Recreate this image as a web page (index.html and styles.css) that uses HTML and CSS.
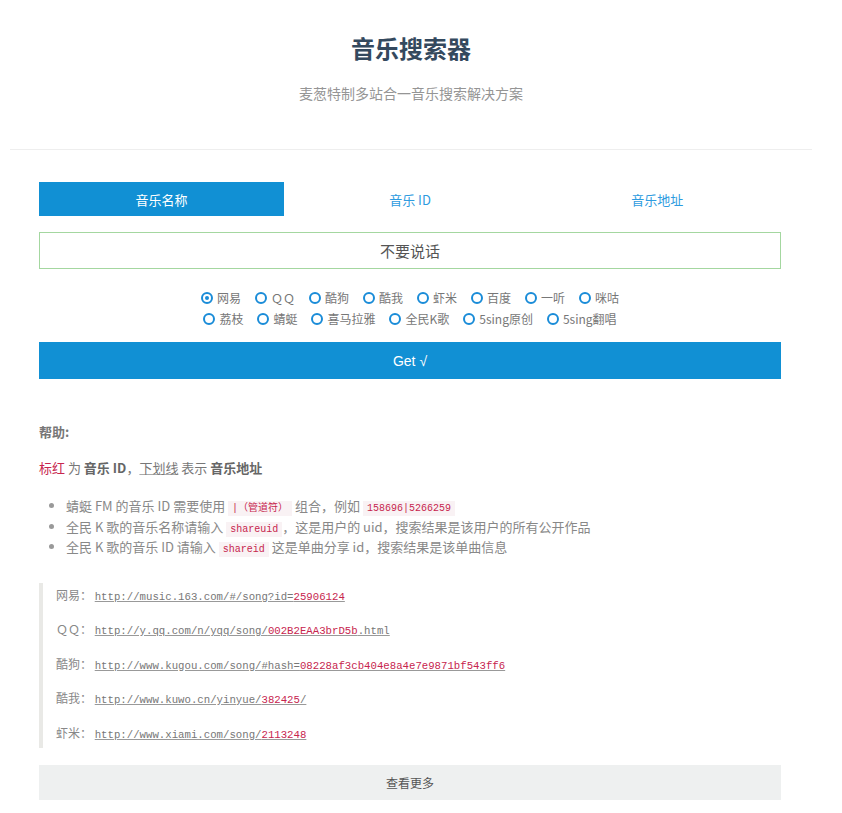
FILE: index.html
```html
<!DOCTYPE html>
<html lang="zh-CN">
<head>
<meta charset="utf-8">
<title>音乐搜索器</title>
<link rel="stylesheet" href="styles.css">
</head>
<body>
<div class="page">
  <header class="header">
    <h1 class="title">音乐搜索器</h1>
    <p class="subtitle">麦葱特制多站合一音乐搜索解决方案</p>
  </header>
  <main class="main">
    <nav class="tabs">
      <div class="tab tab-active">音乐名称</div>
      <div class="tab">音乐 ID</div>
      <div class="tab">音乐地址</div>
    </nav>
    <div class="search">不要说话</div>
    <div class="sources">
      <div class="row">
        <label class="opt"><span class="radio checked"></span>网易</label>
        <label class="opt"><span class="radio"></span>ＱＱ</label>
        <label class="opt"><span class="radio"></span>酷狗</label>
        <label class="opt"><span class="radio"></span>酷我</label>
        <label class="opt"><span class="radio"></span>虾米</label>
        <label class="opt"><span class="radio"></span>百度</label>
        <label class="opt"><span class="radio"></span>一听</label>
        <label class="opt"><span class="radio"></span>咪咕</label>
      </div>
      <div class="row">
        <label class="opt"><span class="radio"></span>荔枝</label>
        <label class="opt"><span class="radio"></span>蜻蜓</label>
        <label class="opt"><span class="radio"></span>喜马拉雅</label>
        <label class="opt"><span class="radio"></span>全民K歌</label>
        <label class="opt"><span class="radio"></span>5sing原创</label>
        <label class="opt"><span class="radio"></span>5sing翻唱</label>
      </div>
    </div>
    <div class="get-btn">Get √</div>

    <section class="help">
      <h3 class="help-title">帮助:</h3>
      <p class="legend"><span class="red">标红</span> 为 <b>音乐 ID</b>，<span class="ul">下划线</span> 表示 <b>音乐地址</b></p>
      <ul class="tips">
        <li>蜻蜓 FM 的音乐 ID 需要使用 <code>|（管道符）</code> 组合，例如 <code>158696|5266259</code></li>
        <li>全民 K 歌的音乐名称请输入 <code>shareuid</code>，这是用户的 uid，搜索结果是该用户的所有公开作品</li>
        <li>全民 K 歌的音乐 ID 请输入 <code>shareid</code> 这是单曲分享 id，搜索结果是该单曲信息</li>
      </ul>
      <blockquote class="examples">
        <p>网易： <span class="link">http://music.163.com/#/song?id=<span class="id">25906124</span></span></p>
        <p>ＱＱ： <span class="link">http://y.qq.com/n/yqq/song/<span class="id">002B2EAA3brD5b</span>.html</span></p>
        <p>酷狗： <span class="link">http://www.kugou.com/song/#hash=<span class="id">08228af3cb404e8a4e7e9871bf543ff6</span></span></p>
        <p>酷我： <span class="link">http://www.kuwo.cn/yinyue/<span class="id">382425</span>/</span></p>
        <p>虾米： <span class="link">http://www.xiami.com/song/<span class="id">2113248</span></span></p>
      </blockquote>
      <div class="more">查看更多</div>
    </section>
  </main>
</div>
</body>
</html>
```
FILE: styles.css
```css
html, body {
  margin: 0;
  padding: 0;
  background: #fff;
}
body {
  font-family: "Noto Sans CJK SC", "Open Sans", sans-serif;
  color: #666;
}
.page {
  width: 822px;
  display: flex;
  flex-direction: column;
}
.header {
  margin: 0 10px;
  padding: 31px 0 46px;
  border-bottom: 1px solid #eeeeee;
  text-align: center;
}
.title {
  margin: 0;
  font-size: 24px;
  line-height: 34px;
  font-weight: 700;
  color: #34495e;
}
.subtitle {
  margin: 18px 0 0;
  font-size: 14px;
  line-height: 20px;
  color: #959595;
}
.main {
  width: 742px;
  margin: 32px 0 0 39px;
  display: flex;
  flex-direction: column;
}
.tabs {
  display: grid;
  grid-template-columns: 1fr 1fr 1fr;
  height: 34px;
}
.tab {
  display: flex;
  align-items: center;
  justify-content: center;
  font-size: 13px;
  color: #2d9be0;
}
.tab-active {
  width: 245px;
  background: #1190d4;
  color: #fff;
}
.search {
  margin-top: 16px;
  height: 35px;
  border: 1px solid #a4d7a0;
  display: flex;
  align-items: center;
  justify-content: center;
  font-size: 15px;
  color: #555;
}
.sources {
  margin-top: 18px;
  display: flex;
  flex-direction: column;
  align-items: center;
}
.row {
  display: flex;
  justify-content: center;
  gap: 14px;
  height: 21px;
  align-items: center;
}
.opt {
  display: flex;
  align-items: center;
  gap: 4px;
  font-size: 12px;
  line-height: 21px;
  color: #777;
}
.radio {
  width: 8px;
  height: 8px;
  border: 2px solid #1a8cd8;
  border-radius: 50%;
  display: flex;
  align-items: center;
  justify-content: center;
}
.radio.checked::after {
  content: "";
  width: 4px;
  height: 4px;
  border-radius: 50%;
  background: #1a8cd8;
}
.get-btn {
  margin-top: 13px;
  height: 37px;
  background: #1190d4;
  color: #fff;
  font-family: "Liberation Sans", "Open Sans", sans-serif;
  font-size: 14px;
  display: flex;
  align-items: center;
  justify-content: center;
}
.help {
  margin-top: 43px;
  display: flex;
  flex-direction: column;
}
.help-title {
  margin: 0;
  font-size: 13px;
  line-height: 20px;
  font-weight: 700;
  color: #777;
}
.legend {
  margin: 16px 0 0;
  font-size: 13px;
  line-height: 20px;
  color: #777;
}
.legend b {
  color: #666;
}
.red {
  color: #c7254e;
}
.ul {
  text-decoration: underline;
  text-decoration-color: #aaa;
}
.tips {
  margin: 18px 0 0;
  padding-left: 27px;
  font-size: 13px;
  line-height: 20.5px;
  color: #888;
}
.tips li {
  height: 20.5px;
}
.tips li::marker {
  color: #999;
}
code {
  font-family: "Liberation Mono", "DejaVu Sans Mono", monospace;
  font-size: 10px;
  line-height: 1;
  padding: 2px 4px;
  color: #c7254e;
  background: #f9f2f4;
}
.examples {
  margin: 25px 0 0;
  padding: 2px 0 5px 13px;
  border-left: 4px solid #e9e9e6;
  display: flex;
  flex-direction: column;
  gap: 14.5px;
}
.examples p {
  margin: 0;
  height: 20px;
  font-size: 12px;
  line-height: 20px;
  color: #888;
}
.link {
  font-family: "Liberation Mono", "DejaVu Sans Mono", monospace;
  font-size: 10.7px;
  line-height: 1;
  color: #777;
  text-decoration: underline;
  text-decoration-color: #999;
}
.id {
  color: #c7254e;
}
.more {
  margin-top: 17px;
  height: 35px;
  background: #eef0f0;
  font-size: 12px;
  color: #555;
  display: flex;
  align-items: center;
  justify-content: center;
}
```
